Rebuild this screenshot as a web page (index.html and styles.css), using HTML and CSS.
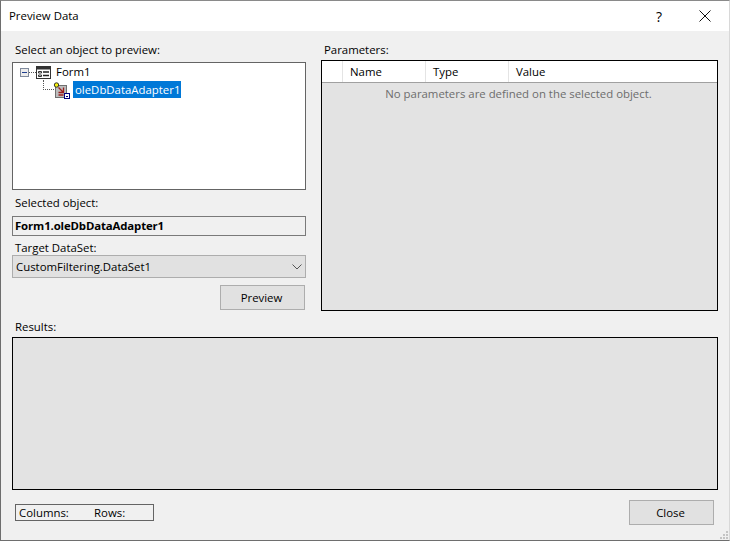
FILE: index.html
```html
<!DOCTYPE html>
<html lang="en">
<head>
<meta charset="utf-8">
<title>Preview Data</title>
<link rel="stylesheet" href="styles.css">
</head>
<body>
<div class="window">
  <header class="titlebar">
    <span class="title">Preview Data</span>
    <span class="help">?</span>
    <svg class="close-x" width="12" height="12" viewBox="0 0 12 12"><path d="M.5.5l11 11M11.500.5l-11 11" stroke="#111" fill="none"/></svg>
  </header>
  <main class="content">
    <div class="top">
      <section class="left">
        <div class="label l-select">Select an object to preview:</div>
        <div class="tree">
          <div class="node-root">
            <span class="expander"><i></i></span>
            <span class="dots-h"></span>
            <svg class="ico-form" width="15" height="13" viewBox="0 0 15 13"><rect x=".5" y=".5" width="14" height="12" fill="#fff" stroke="#333"/><rect x="1" y="1" width="13" height="2.500" fill="#333"/><path d="M2.500 5.500h3v1.500h-3zM2.500 9h3v1.500h-3z" fill="none" stroke="#333"/><path d="M7 6h6M7 9.500h6" stroke="#222" stroke-width="1.500"/></svg>
            <span class="node-text">Form1</span>
          </div>
          <div class="node-child">
            <span class="elbow"></span>
            <svg class="ico-adapter" width="16" height="18" viewBox="0 0 16 18"><rect x="1.500" y="4.500" width="11" height="12" fill="#bdbdbd" stroke="#6f6f6f"/><path d="M4.500 6.500l5 5M9.500 6.500v5h-5M4.500 14h5" fill="none" stroke="#9a1c1c" stroke-width="1.300"/><circle cx="2.500" cy="4" r="2.200" fill="#f4ef10" stroke="#222" stroke-width=".9"/><rect x="10" y="12" width="6" height="6" fill="#00007f"/><rect x="11" y="13" width="4" height="4" fill="#fff"/><path d="M12 15.500h2" stroke="#00007f"/></svg>
            <span class="node-selected">oleDbDataAdapter1</span>
          </div>
        </div>
        <div class="label l-selected">Selected object:</div>
        <div class="readonly">Form1.oleDbDataAdapter1</div>
        <div class="label l-target">Target DataSet:</div>
        <div class="combo">
          <span>CustomFiltering.DataSet1</span>
          <svg width="10" height="6" viewBox="0 0 10 6"><path d="M.5.500L5 5 9.500.5" fill="none" stroke="#555"/></svg>
        </div>
        <div class="actions"><button class="btn btn-preview" type="button">Preview</button></div>
      </section>
      <section class="right">
        <div class="label l-params">Parameters:</div>
        <div class="grid">
          <div class="grid-head">
            <div class="cell c0"></div>
            <div class="cell c1">Name</div>
            <div class="cell c2">Type</div>
            <div class="cell c3">Value</div>
          </div>
          <div class="grid-empty">No parameters are defined on the selected object.</div>
        </div>
      </section>
    </div>
    <div class="label l-results">Results:</div>
    <div class="results"></div>
    <footer class="footer">
      <div class="status"><span class="st-col">Columns:</span><span>Rows:</span></div>
      <button class="btn btn-close" type="button">Close</button>
    </footer>
    <svg class="grip" width="8" height="8" viewBox="0 0 8 8"><path d="M6 0h2v2H6zM3 3h2v2H3zM6 3h2v2H6zM0 6h2v2H0zM3 6h2v2H3zM6 6h2v2H6z" fill="#c4c4c4"/></svg>
  </main>
</div>
</body>
</html>
```
FILE: styles.css
```css
* { box-sizing: border-box; }
html, body { margin: 0; padding: 0; }
body {
  width: 730px;
  height: 541px;
  overflow: hidden;
  background: #f0f0f0;
  font-family: "Open Sans", "Noto Sans", sans-serif;
  font-size: 11.4px;
  color: #000;
}
.window {
  width: 730px;
  height: 541px;
  display: flex;
  flex-direction: column;
  border: 1px solid #6e6e6e;
  border-top-color: #8a8a8a;
  border-right-color: #d8d8d8;
  border-bottom: 1px solid #6e6e6e;
}
.titlebar {
  height: 30px;
  flex: none;
  background: #fff;
  display: flex;
  align-items: center;
  padding: 0 18px 0 8px;
}
.title { flex: 1; line-height: 30px; }
.help { font-size: 14px; margin-right: 37px; }
.content {
  position: relative;
  flex: 1;
  padding: 0 11px 0 11px;
  display: flex;
  flex-direction: column;
}
.top { display: flex; gap: 15px; height: 280px; flex: none; }
.left { width: 294px; flex: none; display: flex; flex-direction: column; }
.right { width: 397px; flex: none; display: flex; flex-direction: column; }
.label { line-height: 16px; height: 16px; margin-left: 3px; white-space: nowrap; }
.l-select { margin-top: 11px; margin-bottom: 4px; }
.l-selected { margin-top: 5px; margin-bottom: 5px; }
.l-target { margin-top: 4px; margin-bottom: -1px; }
.l-params { margin-top: 11px; margin-bottom: 2px; }
.tree {
  height: 128px;
  background: #fff;
  border: 1px solid #646464;
  padding: 0 0 0 7px;
}
.node-root, .node-child { display: flex; align-items: center; position: relative; }
.node-root { height: 18px; }
.node-child { height: 17px; }
.expander {
  width: 9px; height: 9px;
  border: 1px solid #7f8a9c;
  background: #ececec;
  display: flex; align-items: center; justify-content: center;
  flex: none;
}
.expander i { display: block; width: 5px; height: 1px; background: #1f3f8f; }
.dots-h { width: 7px; border-top: 1px dotted #555; flex: none; }
.ico-form { flex: none; margin-right: 5px; }
.node-text { line-height: 18px; }
.elbow {
  width: 11px; height: 10px; flex: none;
  margin: -9px 0 0 23px;
  border-left: 1px dotted #555;
  border-bottom: 1px dotted #555;
}
.ico-adapter { flex: none; align-self: flex-start; overflow: visible; }
.node-selected {
  background: #0078d7;
  color: #fff;
  line-height: 17px;
  padding: 0 1px 0 2px;
  margin-left: 3px;
}
.readonly {
  height: 20px;
  line-height: 18px;
  border: 1px solid #7a7a7a;
  background: #f0f0f0;
  padding-left: 2px;
  font-weight: 700;
  letter-spacing: -0.13px;
}
.combo {
  height: 23px;
  background: #e1e1e1;
  border: 1px solid #adadad;
  display: flex;
  align-items: center;
  justify-content: space-between;
  padding: 0 3px 0 3px;
}
.actions { display: flex; justify-content: flex-end; margin-top: 7px; padding-right: 1px; }
.btn {
  width: 85px;
  background: #e1e1e1;
  border: 1px solid #adadad;
  font: inherit;
  color: #000;
  padding: 0 2px 0 0;
}
.btn-preview { height: 25px; }
.btn-close { height: 25px; }
.grid {
  height: 251px;
  border: 1px solid #000;
  background: #e3e3e3;
  display: flex;
  flex-direction: column;
}
.grid-head { display: flex; height: 22px; background: #fff; border-bottom: 1px solid #a0a0a0; flex: none; }
.cell { line-height: 21px; border-right: 1px solid #e4e4e4; padding-left: 7px; }
.c0 { width: 21px; }
.c1 { width: 83px; }
.c2 { width: 83px; }
.c3 { flex: 1; border-right: 0; }
.grid-empty { text-align: center; color: #6d6d6d; line-height: 22px; padding-right: 2px; }
.l-results { margin-top: 8px; margin-bottom: 2px; }
.results { height: 153px; flex: none; border: 1px solid #000; background: #e3e3e3; }
.footer {
  display: flex;
  justify-content: space-between;
  align-items: center;
  margin-top: 10px;
  padding: 0 4px 0 3px;
}
.status {
  width: 139px;
  height: 17px;
  border: 1px solid #646464;
  line-height: 15px;
  padding-left: 3px;
  display: flex;
}
.st-col { width: 75px; }
.grip { position: absolute; right: 1px; bottom: 1px; }
```
